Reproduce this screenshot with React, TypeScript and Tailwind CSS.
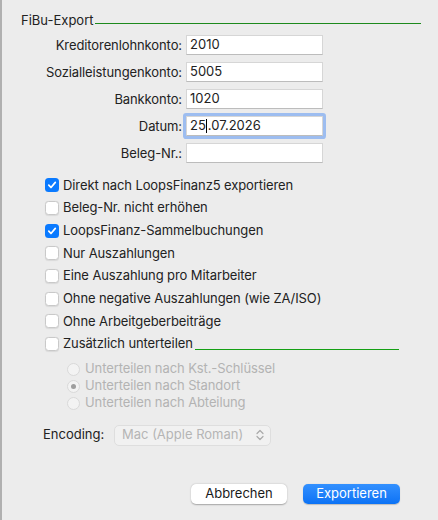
import React from 'react';

const FIELDS = [
  { label: 'Kreditorenlohnkonto:', value: '2010' },
  { label: 'Sozialleistungenkonto:', value: '5005' },
  { label: 'Bankkonto:', value: '1020' },
  { label: 'Datum:', value: '25.07.2026', focused: true },
  { label: 'Beleg-Nr.:', value: '' },
];

const OPTIONS = [
  { label: 'Direkt nach LoopsFinanz5 exportieren', checked: true },
  { label: 'Beleg-Nr. nicht erhöhen', checked: false },
  { label: 'LoopsFinanz-Sammelbuchungen', checked: true },
  { label: 'Nur Auszahlungen', checked: false },
  { label: 'Eine Auszahlung pro Mitarbeiter', checked: false },
  { label: 'Ohne negative Auszahlungen (wie ZA/ISO)', checked: false },
  { label: 'Ohne Arbeitgeberbeiträge', checked: false },
];

const RADIOS = [
  { label: 'Unterteilen nach Kst.-Schlüssel', selected: false },
  { label: 'Unterteilen nach Standort', selected: true },
  { label: 'Unterteilen nach Abteilung', selected: false },
];

const Checkbox: React.FC<{ checked: boolean }> = ({ checked }) =>
  checked ? (
    <span className="w-[14px] h-[14px] rounded-[3.5px] bg-[#0a7aff] flex items-center justify-center shrink-0">
      <svg width="10" height="10" viewBox="0 0 10 10">
        <path d="M1.8 5.2 L4 7.5 L8.3 2.4" fill="none" stroke="white" strokeWidth="1.7" strokeLinecap="round" strokeLinejoin="round" />
      </svg>
    </span>
  ) : (
    <span className="w-[14px] h-[14px] rounded-[3.5px] bg-white border border-[#c9c9c9] shadow-[0_0.5px_1px_rgba(0,0,0,0.08)] shrink-0" />
  );

export default function App() {
  return (
    <div
      className="w-[438px] h-[520px] bg-[#ececec] border-l-2 border-[#b0b0b0] text-[13px] text-[#222] overflow-hidden pt-[12px]"
      style={{ fontFamily: 'Inter, "Liberation Sans", sans-serif' }}
    >
      {/* Title */}
      <div className="flex items-end pl-[19px] pr-[17px] h-[16px]">
        <span className="leading-[16px]">FiBu-Export</span>
        <div className="flex-1 h-px bg-[#1d8a1d] mb-[4px] ml-[1px]" />
      </div>

      {/* Fields */}
      <div className="flex flex-col gap-[7px] mt-[7px]">
        {FIELDS.map((f) => (
          <div key={f.label} className="flex items-center h-[20px]">
            <span className="w-[182px] text-right pr-[2px] tracking-[-0.1px] leading-[20px]">{f.label}</span>
            <div
              className={`ml-[2px] w-[137px] h-[20px] bg-white border border-[#d6d6d6] border-b-[#bcbcbc] flex items-center pl-[3px] ${
                f.focused ? 'ring-[3px] ring-[#9dbdf0] rounded-[1px]' : ''
              }`}
            >
              {f.focused ? (
                <span className="flex items-center">
                  25<span className="w-px h-[14px] bg-black mx-[0.5px]" />.07.2026
                </span>
              ) : (
                f.value
              )}
            </div>
          </div>
        ))}
      </div>

      {/* Checkboxes */}
      <div className="flex flex-col mt-[11px] pl-[43px] tracking-[-0.1px]">
        {OPTIONS.map((o) => (
          <div key={o.label} className="flex items-center h-[22.7px] gap-[4px]">
            <Checkbox checked={o.checked} />
            <span>{o.label}</span>
          </div>
        ))}
        <div className="flex items-center h-[22.7px] gap-[4px] pr-[39px]">
          <Checkbox checked={false} />
          <div className="flex-1 flex items-end">
            <span>Zusätzlich unterteilen</span>
            <div className="flex-1 h-px bg-[#14a014] mb-[4px] ml-[2px]" />
          </div>
        </div>
      </div>

      {/* Radios */}
      <div className="flex flex-col mt-[5px] pl-[65px] text-[#b3b3b3] tracking-[-0.1px]">
        {RADIOS.map((r) => (
          <div key={r.label} className="flex items-center h-[17px] gap-[5px]">
            <span className="w-[13px] h-[13px] rounded-full bg-[#f3f3f3] border border-[#d9d9d9] flex items-center justify-center">
              {r.selected && <span className="w-[5px] h-[5px] rounded-full bg-[#9e9e9e]" />}
            </span>
            <span>{r.label}</span>
          </div>
        ))}
      </div>

      {/* Encoding */}
      <div className="flex items-center mt-[13px] pl-[41px] h-[21px]">
        <span className="w-[71px]">Encoding:</span>
        <div className="w-[157px] h-[21px] rounded-[5px] bg-[#f1f1f1] border border-[#dedede] flex items-center pl-[7px] pr-[6px] text-[#b5b5b5]">
          <span className="flex-1">Mac (Apple Roman)</span>
          <svg width="8" height="12" viewBox="0 0 8 12">
            <path d="M1 4.5 L4 1.5 L7 4.5 M1 7.5 L4 10.5 L7 7.5" fill="none" stroke="#a9a9a9" strokeWidth="1.2" strokeLinecap="round" strokeLinejoin="round" />
          </svg>
        </div>
      </div>

      {/* Buttons */}
      <div className="flex justify-end gap-[16px] mt-[38px] pr-[38px]">
        <button className="w-[96px] h-[20px] rounded-[5px] bg-white text-[#1a1a1a] shadow-[0_0.5px_1.5px_rgba(0,0,0,0.3)] leading-none">
          Abbrechen
        </button>
        <button className="w-[97px] h-[20px] rounded-[5px] bg-gradient-to-b from-[#3290ff] to-[#0a72f5] text-white shadow-[0_0.5px_1px_rgba(0,0,0,0.2)] leading-none">
          Exportieren
        </button>
      </div>
    </div>
  );
}
